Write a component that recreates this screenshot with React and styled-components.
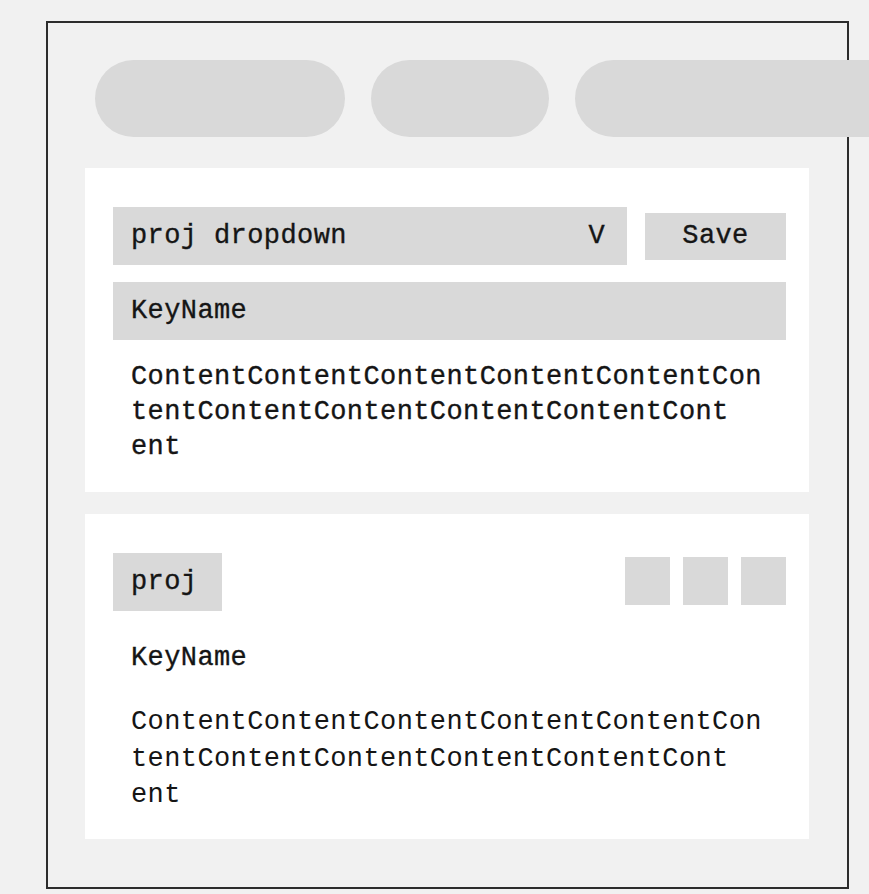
import React from 'react';
import styled, { createGlobalStyle } from 'styled-components';

const GlobalStyle = createGlobalStyle`
  html, body {
    margin: 0;
    padding: 0;
    background: #f1f1f1;
    overflow: hidden;
  }
  * {
    box-sizing: border-box;
  }
`;

const content = 'ContentContentContentContentContentCon\ntentContentContentContentContentCont\nent';

const Page = styled.div`
  width: 869px;
  height: 894px;
  overflow: hidden;
  padding: 21px 0 0 46px;
  font-family: 'Liberation Mono', 'DejaVu Sans Mono', monospace;
  font-size: 27px;
  letter-spacing: 0.4px;
  color: #151515;
  -webkit-text-stroke: 0.35px #151515;
`;

const Frame = styled.div`
  width: 803px;
  height: 868px;
  border: 2px solid #2c2c2c;
  padding: 37px 0 0 37px;
`;

const PillRow = styled.div`
  display: flex;
  gap: 26px;
  margin-left: 10px;
  width: 780px;
`;

const Pill = styled.div`
  flex: none;
  width: ${(props) => props.w}px;
  height: 77px;
  border-radius: 40px;
  background: #d9d9d9;
`;

const CardList = styled.div`
  display: flex;
  flex-direction: column;
  gap: 22px;
  margin-top: 31px;
  width: 724px;
`;

const Card = styled.div`
  background: #fff;
  padding: 39px 23px ${(props) => props.pb}px 28px;
`;

const TopRow = styled.div`
  display: flex;
  align-items: center;
  gap: 18px;
`;

const Field = styled.div`
  display: flex;
  align-items: center;
  justify-content: space-between;
  height: 58px;
  padding: 0 22px 0 18px;
  background: #d9d9d9;
  flex: ${(props) => (props.grow ? 1 : 'none')};
  margin-top: ${(props) => props.mt || 0}px;
`;

const SaveButton = styled.div`
  width: 141px;
  height: 47px;
  display: flex;
  align-items: center;
  justify-content: center;
  background: #d9d9d9;
`;

const Content = styled.div`
  margin-top: ${(props) => props.mt}px;
  padding-left: 18px;
  line-height: ${(props) => props.lh}px;
  white-space: pre-line;
  -webkit-text-stroke: ${(props) => (props.light ? '0px' : '0.35px #151515')};
`;

const HeaderRow = styled.div`
  display: flex;
  justify-content: space-between;
  align-items: flex-start;
`;

const Tag = styled.div`
  height: 58px;
  padding: 0 25px 0 18px;
  display: flex;
  align-items: center;
  background: #d9d9d9;
`;

const Squares = styled.div`
  display: flex;
  gap: 13px;
  margin-top: 4px;
`;

const Square = styled.div`
  width: 45px;
  height: 48px;
  background: #d9d9d9;
`;

const App = () => {
  return (
    <Page>
      <GlobalStyle />
      <Frame>
        <PillRow>
          <Pill w={250} />
          <Pill w={178} />
          <Pill w={360} />
        </PillRow>
        <CardList>
          <Card pb={27}>
            <TopRow>
              <Field grow>
                <span>proj dropdown</span>
                <span>V</span>
              </Field>
              <SaveButton>Save</SaveButton>
            </TopRow>
            <Field mt={17}>KeyName</Field>
            <Content mt={20} lh={35}>{content}</Content>
          </Card>
          <Card pb={25}>
            <HeaderRow>
              <Tag>proj</Tag>
              <Squares>
                <Square />
                <Square />
                <Square />
              </Squares>
            </HeaderRow>
            <Content mt={30} lh={35}>KeyName</Content>
            <Content mt={28} lh={36.5} light>{content}</Content>
          </Card>
        </CardList>
      </Frame>
    </Page>
  );
};

export default App;
